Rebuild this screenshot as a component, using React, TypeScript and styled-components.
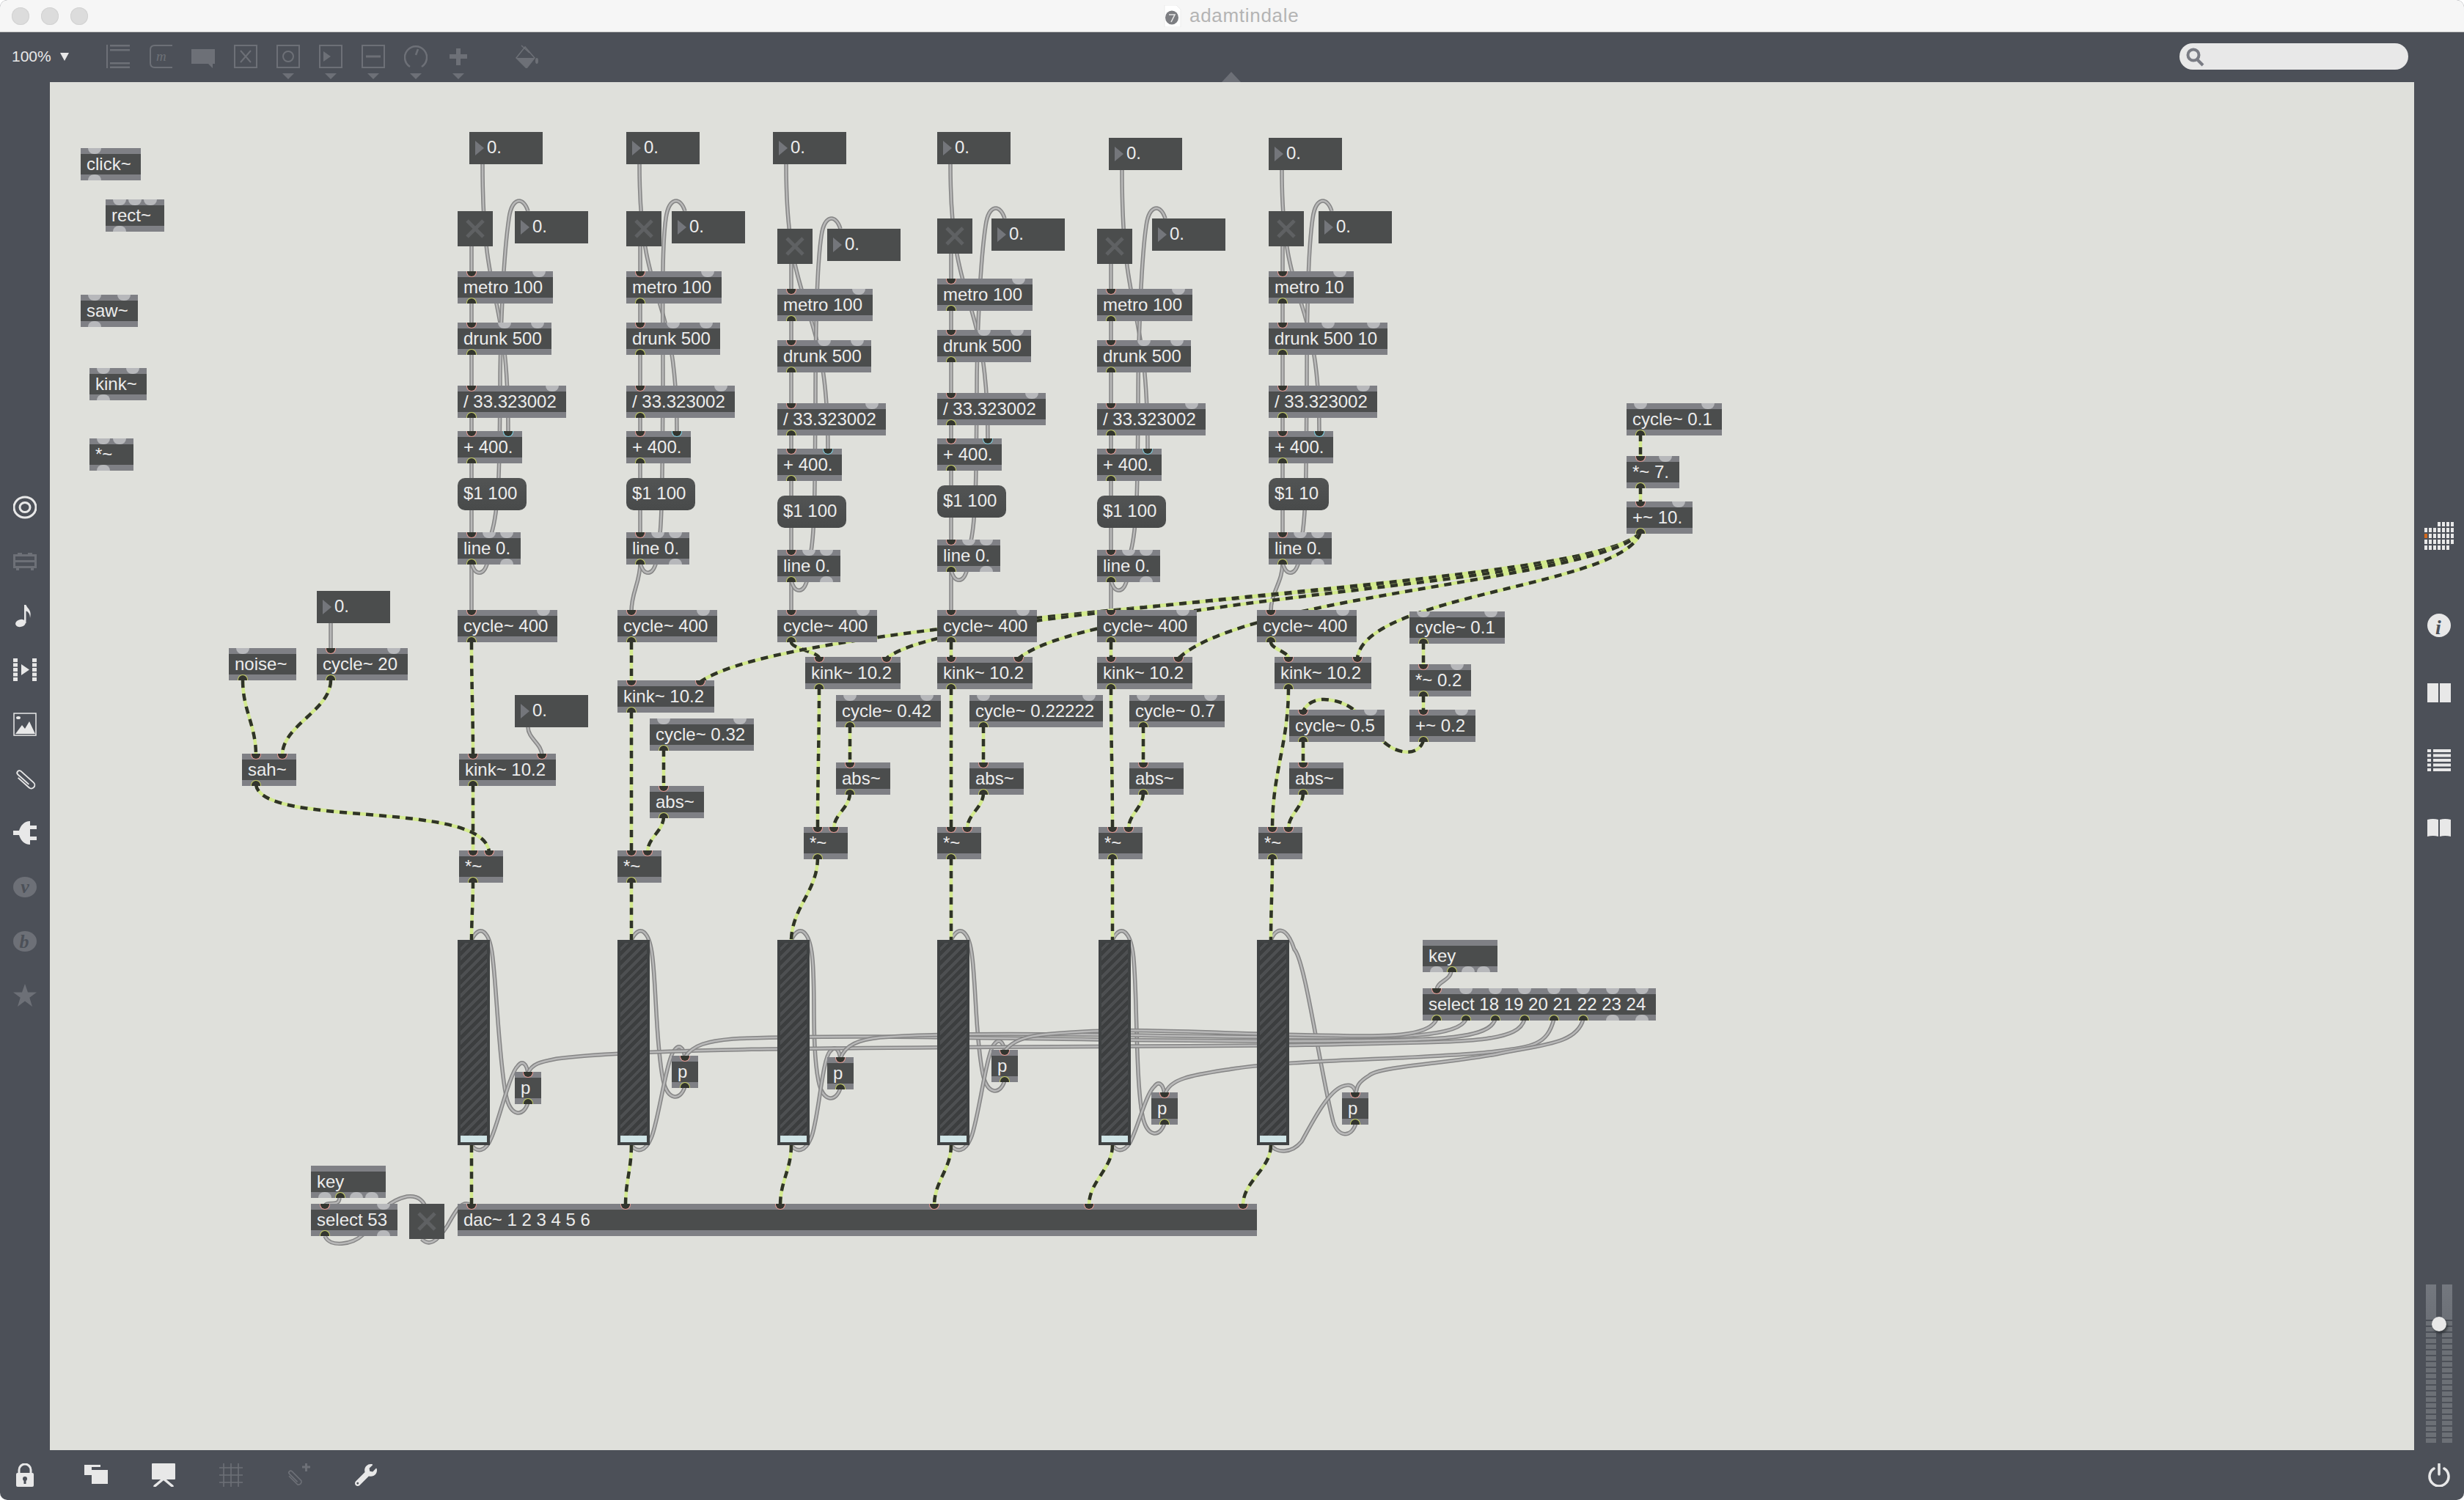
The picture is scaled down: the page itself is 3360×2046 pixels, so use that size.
import React from 'react';
import styled, { createGlobalStyle } from 'styled-components';
import { FaWrench } from 'react-icons/fa';

const BAR = '#4c5058';
const DIM = '#6d7077';
const LIT = '#e8e8e8';

const Global = createGlobalStyle`
  html, body { margin: 0; padding: 0; background: #ffffff; }
  body { font-family: "Liberation Sans", Arial, sans-serif; }
`;

const Win = styled.div`
  width: 3360px;
  height: 2046px;
  display: flex;
  flex-direction: column;
  overflow: hidden;
  border-radius: 10px;
  background: ${BAR};
`;
const TitleBar = styled.div`
  height: 43px;
  box-sizing: border-box;
  flex: none;
  display: flex;
  align-items: center;
  background: #f6f6f6;
  box-shadow: 0 1px 0 #c9c9c9;
  position: relative;
  z-index: 2;
`;
const Lights = styled.div`
  display: flex;
  gap: 16px;
  padding-left: 16px;
`;
const Light = styled.span`
  width: 24px;
  height: 24px;
  border-radius: 50%;
  background: #dcdcdc;
  box-shadow: inset 0 0 0 1px #d2d2d2;
`;
const TitleGroup = styled.div`
  position: absolute;
  left: 1587px;
  top: 0;
  height: 43px;
  display: flex;
  align-items: center;
  gap: 11px;
`;
const TitleText = styled.span`
  font-size: 26px;
  letter-spacing: 0.7px;
  color: #b4b4b4;
`;
const Toolbar = styled.div`
  height: 69px;
  flex: none;
  display: flex;
  align-items: flex-start;
  position: relative;
`;
const ZoomGroup = styled.div`
  width: 145px;
  box-sizing: border-box;
  padding: 20px 0 0 16px;
  display: flex;
  align-items: center;
  gap: 12px;
  font-size: 21px;
  line-height: 28px;
  color: ${LIT};
`;
const ZoomArrow = styled.span`
  width: 0;
  height: 0;
  border-left: 6px solid transparent;
  border-right: 6px solid transparent;
  border-top: 11px solid ${LIT};
`;
const ToolButtons = styled.div`
  display: flex;
  gap: 26px;
  padding-top: 18px;
`;
const ToolButton = styled.div<{ $gap?: number }>`
  width: 32px;
  height: 32px;
  position: relative;
  margin-left: ${(p) => p.$gap ?? 0}px;
  color: ${DIM};
`;
const Caret = styled.span`
  position: absolute;
  left: 8px;
  top: 39px;
  width: 0;
  height: 0;
  border-left: 8px solid transparent;
  border-right: 8px solid transparent;
  border-top: 8px solid ${DIM};
`;
const Search = styled.div`
  margin: 16px 76px 0 auto;
  width: 312px;
  height: 36px;
  border-radius: 18px;
  background: #e8e8e8;
  display: flex;
  align-items: center;
  padding-left: 8px;
  box-sizing: border-box;
  color: #7a7c84;
`;
const Notch = styled.span`
  position: absolute;
  left: 1666px;
  bottom: 0;
  width: 0;
  height: 0;
  border-left: 13px solid transparent;
  border-right: 13px solid transparent;
  border-bottom: 14px solid ${DIM};
`;
const Middle = styled.div`
  flex: 1;
  display: flex;
  min-height: 0;
`;
const LeftBar = styled.div`
  width: 68px;
  flex: none;
  box-sizing: border-box;
  padding-top: 543px;
  display: flex;
  flex-direction: column;
  align-items: center;
`;
const SideSlot = styled.div<{ $lit?: boolean }>`
  height: 74px;
  width: 68px;
  display: flex;
  align-items: center;
  justify-content: center;
  color: ${(p) => (p.$lit ? LIT : DIM)};
`;
const RightBar = styled.div`
  width: 68px;
  flex: none;
  box-sizing: border-box;
  padding-top: 600px;
  display: flex;
  flex-direction: column;
  align-items: center;
  color: ${LIT};
  position: relative;
`;
const RightItem = styled.div<{ $after: number }>`
  display: flex;
  margin-bottom: ${(p) => p.$after}px;
`;
const Meter = styled.div`
  margin-top: auto;
  margin-bottom: 10px;
  display: flex;
  gap: 8px;
  height: 216px;
  position: relative;
`;
const MeterCol = styled.div`
  width: 14px;
  height: 216px;
  background:
    linear-gradient(#74787f, #6c7077) 0 0 / 100% 48px no-repeat,
    repeating-linear-gradient(to top, #6c7076 0 6px, transparent 6px 8px);
`;
const MeterKnob = styled.span`
  position: absolute;
  left: 8px;
  top: 44px;
  width: 20px;
  height: 20px;
  border-radius: 50%;
  background: #e8e8e8;
  box-shadow: 2px 3px 3px rgba(30, 32, 36, 0.55);
`;
const Canvas = styled.div`
  flex: 1;
  position: relative;
  background: #dfe0db;
  overflow: hidden;
`;
const Wires = styled.svg`
  position: absolute;
  left: 0;
  top: 0;
  fill: none;
`;
const BottomBar = styled.div`
  height: 68px;
  flex: none;
  display: flex;
  align-items: center;
  gap: 60px;
  padding-left: 18px;
  position: relative;
`;
const BottomIcon = styled.div<{ $lit?: boolean; $extra?: number }>`
  width: 32px;
  height: 32px;
  display: flex;
  align-items: center;
  justify-content: center;
  color: ${(p) => (p.$lit ? LIT : DIM)};
  margin-right: ${(p) => p.$extra ?? 0}px;
`;
const PowerIcon = styled.div`
  margin-left: auto;
  margin-right: 18px;
  width: 32px;
  height: 32px;
  color: ${LIT};
`;

const Node = styled.div<{ $x: number; $y: number; $w: number; $h?: number }>`
  position: absolute;
  left: ${(p) => p.$x - 68}px;
  top: ${(p) => p.$y - 112}px;
  width: ${(p) => p.$w}px;
  height: ${(p) => p.$h ?? 44}px;
`;
const ObjectBox = styled(Node)`
  background: #7f8085;
  font-size: 24px;
  color: #ececec;
`;
const ObjectBody = styled.div`
  position: absolute;
  left: 0;
  right: 0;
  top: 8px;
  height: 28px;
  line-height: 27px;
  padding-left: 8px;
  background: #4b4d4d;
  white-space: nowrap;
`;
const Port = styled.span<{ $x: number; $side: 'top' | 'bottom'; $kind: string }>`
  position: absolute;
  left: ${(p) => p.$x}px;
  transform: translateX(-50%);
  box-sizing: border-box;
  ${(p) => (p.$side === 'top' ? 'top: 0; border-radius: 0 0 9px 9px;' : 'bottom: 0; border-radius: 9px 9px 0 0;')}
  ${(p) =>
    p.$kind === 'u'
      ? 'width: 18px; height: 8px; background: #b7b8bb;'
      : `width: 14px; height: 8px; background: #33352f; border: 1.5px solid ${
          p.$kind === 'c' ? '#e99c96' : p.$kind === 'b' ? '#7fd2e4' : '#c9d267'
        }; ${p.$side === 'top' ? 'border-top: 0;' : 'border-bottom: 0;'}`}
`;
const NumberBox = styled(Node)`
  background: #4b4d4d;
  font-size: 24px;
  color: #ececec;
  line-height: 41px;
  padding-left: 24px;
  box-sizing: border-box;
`;
const NumberArrow = styled.span`
  position: absolute;
  left: 8px;
  top: 12px;
  width: 0;
  height: 0;
  border-top: 10px solid transparent;
  border-bottom: 10px solid transparent;
  border-left: 12px solid #74767b;
`;
const MessageBox = styled(Node)`
  background: linear-gradient(#525454, #484a4a);
  border-radius: 10px;
  font-size: 24px;
  color: #ececec;
  line-height: 42px;
  padding-left: 8px;
  box-sizing: border-box;
`;
const ToggleBox = styled(Node)`
  background: #4b4d4d;
  color: #5f6163;
  display: flex;
  align-items: center;
  justify-content: center;
`;
const SliderBox = styled(Node)`
  background: #3f4243;
  box-sizing: border-box;
  padding: 4px;
  display: flex;
  flex-direction: column;
`;
const SliderTrack = styled.div`
  flex: 1;
  background: repeating-linear-gradient(-45deg, #3c3e3f 0 5px, #4d4f51 5px 9px);
`;
const SliderKnob = styled.div`
  height: 9px;
  margin-bottom: 0;
  background: #cfe4e6;
`;

/* ---------- wires ---------- */
const curve = (x1: number, y1: number, x2: number, y2: number, k = 0.4) => {
  const d = Math.abs(y2 - y1) * k;
  return `M${x1} ${y1} C${x1} ${y1 + d} ${x2} ${y2 - d} ${x2} ${y2}`;
};

const GrayCord = ({ d }: { d: string }) => (
  <>
    <path d={d} stroke="#858585" strokeWidth={5.5} />
    <path d={d} stroke="#b8b8b8" strokeWidth={2.5} />
  </>
);
const SignalCord = ({ d }: { d: string }) => (
  <>
    <path d={d} stroke="#d3ea8e" strokeWidth={4.5} />
    <path d={d} stroke="#2f3327" strokeWidth={4.5} strokeDasharray="10 8" />
  </>
);

type Col = {
  x: number; fx: number; fy: number; ty: number; f2x: number; f2y: number; dy: number; cyX: number; mid: number;
  met: string; metW: number; dr: string; drW: number; msg: string; msgW: number;
};
const base = { met: 'metro 100', metW: 130, dr: 'drunk 500', drW: 128, msg: '$1 100', msgW: 94 };
const cols: Col[] = [
  { ...base, x: 624, fx: 640, fy: 180, ty: 288, f2x: 702, f2y: 288, dy: 0, cyX: 624, mid: 682 },
  { ...base, x: 854, fx: 854, fy: 180, ty: 288, f2x: 916, f2y: 288, dy: 0, cyX: 842, mid: 904 },
  { ...base, x: 1060, fx: 1054, fy: 180, ty: 312, f2x: 1128, f2y: 312, dy: 24, cyX: 1060, mid: 1112 },
  { ...base, x: 1278, fx: 1278, fy: 180, ty: 298, f2x: 1352, f2y: 298, dy: 10, cyX: 1278, mid: 1332 },
  { ...base, x: 1496, fx: 1512, fy: 188, ty: 312, f2x: 1571, f2y: 298, dy: 24, cyX: 1496, mid: 1552 },
  { ...base, x: 1730, fx: 1730, fy: 188, ty: 288, f2x: 1798, f2y: 288, dy: 0, cyX: 1714, mid: 1782, met: 'metro 10', metW: 116, dr: 'drunk 500 10', drW: 162, msg: '$1 10', msgW: 82 },
];

type Ob = { t: string; x: number; y: number; w: number; top?: string; bot?: string };
const o = (t: string, x: number, y: number, w: number, top = '', bot = ''): Ob => ({ t, x, y, w, top, bot });

const objects: Ob[] = [
  o('click~', 110, 202, 82, 'u', 'u'),
  o('rect~', 144, 272, 80, 'uuu', 'u'),
  o('saw~', 110, 402, 78, 'uu', 'u'),
  o('kink~', 122, 502, 78, 'uu', 'u'),
  o('*~', 122, 598, 60, 'uu', 'u'),
  o('noise~', 312, 884, 92, 'u', 'y'),
  o('cycle~ 20', 432, 884, 124, 'cu', 'y'),
  o('sah~', 330, 1028, 74, 'cc', 'y'),
  o('kink~ 10.2', 626, 1028, 132, 'cc', 'y'),
  o('*~', 626, 1160, 60, 'cc', 'y'),
  o('kink~ 10.2', 842, 928, 132, 'cc', 'y'),
  o('cycle~ 0.32', 886, 980, 142, 'uu', 'y'),
  o('abs~', 886, 1072, 74, 'c', 'y'),
  o('*~', 842, 1160, 60, 'cc', 'y'),
  o('kink~ 10.2', 1098, 896, 130, 'cc', 'y'),
  o('cycle~ 0.42', 1140, 948, 143, 'uu', 'y'),
  o('abs~', 1140, 1040, 74, 'c', 'y'),
  o('*~', 1096, 1128, 60, 'cc', 'y'),
  o('kink~ 10.2', 1278, 896, 130, 'cc', 'y'),
  o('cycle~ 0.22222', 1322, 948, 182, 'uu', 'y'),
  o('abs~', 1322, 1040, 74, 'c', 'y'),
  o('*~', 1278, 1128, 60, 'cc', 'y'),
  o('kink~ 10.2', 1496, 896, 130, 'cc', 'y'),
  o('cycle~ 0.7', 1540, 948, 130, 'uu', 'y'),
  o('abs~', 1540, 1040, 74, 'c', 'y'),
  o('*~', 1498, 1128, 60, 'cc', 'y'),
  o('kink~ 10.2', 1738, 896, 132, 'cc', 'y'),
  o('cycle~ 0.5', 1758, 968, 130, 'cu', 'y'),
  o('abs~', 1758, 1040, 74, 'c', 'y'),
  o('*~', 1716, 1128, 60, 'cc', 'y'),
  o('cycle~ 0.1', 1922, 834, 130, 'uu', 'y'),
  o('*~ 0.2', 1922, 906, 84, 'cu', 'y'),
  o('+~ 0.2', 1922, 968, 90, 'cu', 'y'),
  o('cycle~ 0.1', 2218, 550, 130, 'uu', 'y'),
  o('*~ 7.', 2218, 622, 72, 'cu', 'y'),
  o('+~ 10.', 2218, 684, 90, 'cu', 'y'),
  o('p', 702, 1462, 36, 'c', 'y'),
  o('p', 916, 1440, 36, 'c', 'y'),
  o('p', 1128, 1442, 36, 'c', 'y'),
  o('p', 1352, 1432, 36, 'c', 'y'),
  o('p', 1570, 1490, 36, 'c', 'y'),
  o('p', 1830, 1490, 36, 'c', 'y'),
  o('key', 424, 1590, 102, '', 'uyuu'),
  o('select 53', 424, 1642, 118, 'cu', 'yu'),
  o('key', 1940, 1282, 102, '', 'uyuu'),
  o('select 18 19 20 21 22 23 24', 1940, 1348, 318, 'cuuuuuuu', 'yyyyyyuu'),
  o('dac~ 1 2 3 4 5 6', 624, 1642, 1090, 'cccccc', ''),
];
cols.forEach((c) => {
  objects.push(
    o(c.met, c.x, 370 + c.dy, c.metW, 'cu', 'y'),
    o(c.dr, c.x, 440 + c.dy, c.drW, 'cuu', 'y'),
    o('/ 33.323002', c.x, 526 + c.dy, 148, 'cu', 'y'),
    o('+ 400.', c.x, 588 + c.dy, 88, 'cb', 'y'),
    o('line 0.', c.x, 726 + c.dy, 86, 'cuu', 'yu'),
    o('cycle~ 400', c.cyX, 832, 136, 'cu', 'y'),
  );
});

const numbers: { x: number; y: number }[] = [
  { x: 432, y: 806 },
  { x: 702, y: 948 },
  ...cols.flatMap((c) => [
    { x: c.fx, y: c.fy },
    { x: c.f2x, y: c.f2y },
  ]),
];
const toggles: { x: number; y: number }[] = [{ x: 558, y: 1642 }, ...cols.map((c) => ({ x: c.x, y: c.ty }))];
const sliders = [624, 842, 1060, 1278, 1498, 1714];

const grayPaths: string[] = [
  curve(451, 850, 451, 886),
  curve(720, 992, 739, 1030),
  'M463 1634 C462 1648 444 1636 443 1646',
  'M443 1686 C450 1702 480 1698 495 1684 C515 1665 520 1640 555 1632 C570 1630 578 1638 582 1650',
  'M575 1690 C585 1700 595 1695 610 1672 C622 1650 630 1636 643 1644',
  'M1979 1324 C1978 1338 1960 1338 1959 1350',
];
cols.forEach((c) => {
  const x = c.x, y = c.dy;
  const s = x + 19;
  grayPaths.push(
    curve(c.fx + 18, c.fy + 44, x + 69, 590 + y, 0.55),
    `M${c.f2x + 18} ${c.f2y} C${c.f2x + 12} ${c.f2y - 20} ${c.f2x - 4} ${c.f2y - 20} ${c.f2x - 8} ${c.f2y + 10} C${c.f2x - 14} ${c.f2y + 50} ${c.mid} ${430 + y} ${c.mid} ${526 + y} C${c.mid - 1} ${620 + y} ${c.mid} ${690 + y} ${x + 46} ${728 + y}`,
    curve(s, c.ty + 46, s, 372 + y),
    curve(s, 412 + y, s, 442 + y),
    curve(s, 482 + y, s, 528 + y),
    curve(s, 568 + y, s, 590 + y),
    curve(s, 630 + y, s, 654 + y),
    curve(s, 694 + y, s, 728 + y),
    curve(s, 768 + y, c.cyX + 19, 834),
    `M${s} ${768 + y} C${s + 5} ${786 + y} ${s + 17} ${786 + y} ${s + 22} ${766 + y}`,
  );
});

const sliderLoop = (sx: number, px: number, py: number) => {
  const oy = py + 42;
  return [
    `M${px} ${oy} C${px - 6} ${oy + 20} ${px - 24} ${oy + 20} ${px - 30} ${oy - 10} C${px - 40} ${oy - 60} ${sx + 34} 1340 ${sx + 28} 1300 C${sx + 24} 1272 ${sx + 12} 1258 ${sx} 1282`,
    `M${sx} 1562 C${sx + 7} 1572 ${sx + 19} 1572 ${sx + 27} 1552 C${sx + 37} 1530 ${px - 25} ${py + 2} ${px - 14} ${py - 8} C${px - 8} ${py - 16} ${px - 2} ${py - 12} ${px} ${py + 2}`,
  ];
};
grayPaths.push(
  ...sliderLoop(643, 720, 1462),
  ...sliderLoop(861, 934, 1440),
  ...sliderLoop(1079, 1146, 1442),
  ...sliderLoop(1297, 1370, 1432),
  ...sliderLoop(1517, 1588, 1490),
  'M1849 1532 C1843 1552 1825 1552 1818 1530 C1800 1460 1780 1310 1765 1295 C1755 1265 1742 1262 1733 1282',
  'M1733 1562 C1740 1572 1760 1575 1775 1557 C1790 1530 1810 1490 1830 1482 C1840 1478 1847 1480 1849 1492',
  'M2079 1390 C2070 1425 1990 1420 1800 1425 C1400 1430 900 1425 760 1444 C740 1448 725 1450 720 1464',
  'M2039 1390 C2030 1420 1950 1418 1800 1420 C1500 1422 1200 1408 1000 1417 C965 1420 945 1425 934 1442',
  'M1999 1390 C1990 1415 1900 1415 1800 1415 C1600 1415 1350 1405 1200 1415 C1172 1418 1152 1425 1146 1444',
  'M1959 1390 C1950 1412 1900 1413 1860 1413 C1700 1412 1560 1402 1480 1407 C1420 1410 1385 1412 1370 1434',
  'M2119 1390 C2110 1425 2090 1428 2040 1434 C1950 1445 1760 1445 1680 1458 C1630 1466 1595 1470 1589 1492',
  'M2159 1390 C2150 1425 2100 1425 2040 1438 C1960 1452 1880 1455 1867 1467 C1852 1476 1850 1482 1849 1492',
);

const signalPaths: string[] = [
  curve(331, 928, 349, 1030),
  curve(451, 928, 385, 1030),
  curve(643, 876, 645, 1030),
  curve(645, 1070, 645, 1162),
  'M349 1070 C356 1130 660 1090 667 1162',
  curve(645, 1202, 643, 1284),
  curve(643, 1562, 643, 1644),
  curve(861, 876, 861, 930),
  curve(861, 970, 861, 1162),
  curve(861, 1202, 861, 1284),
  curve(861, 1562, 853, 1644),
  curve(905, 1022, 905, 1074),
  curve(905, 1114, 883, 1162),
  curve(1079, 876, 1117, 898),
  curve(1117, 938, 1115, 1130),
  curve(1159, 990, 1159, 1042),
  curve(1159, 1082, 1137, 1130),
  curve(1115, 1170, 1079, 1284),
  curve(1079, 1562, 1064, 1644),
  curve(1297, 876, 1297, 898),
  curve(1297, 938, 1297, 1130),
  curve(1341, 990, 1341, 1042),
  curve(1341, 1082, 1319, 1130),
  curve(1297, 1170, 1297, 1284),
  curve(1297, 1562, 1274, 1644),
  curve(1515, 876, 1515, 898),
  curve(1515, 938, 1517, 1130),
  curve(1559, 990, 1559, 1042),
  curve(1559, 1082, 1539, 1130),
  curve(1517, 1170, 1517, 1284),
  curve(1517, 1562, 1485, 1644),
  curve(1733, 876, 1757, 898),
  curve(1757, 938, 1735, 1130),
  curve(1777, 1010, 1777, 1042),
  curve(1777, 1082, 1757, 1130),
  curve(1735, 1170, 1733, 1284),
  curve(1733, 1562, 1695, 1644),
  curve(1941, 876, 1941, 908),
  curve(1941, 948, 1941, 970),
  curve(2237, 592, 2237, 624),
  curve(2237, 664, 2237, 686),
  'M1941 1010 C1935 1032 1905 1030 1885 1010 C1860 985 1850 960 1815 955 C1800 952 1785 955 1777 970',
  'M2237 726 C2170 810 1100 830 955 930',
  'M2237 726 C2180 800 1300 820 1209 898',
  'M2237 726 C2180 800 1500 810 1389 898',
  'M2237 726 C2190 790 1700 810 1607 898',
  'M2237 726 C2215 800 1860 810 1851 898',
];

/* ---------- port layout ---------- */
const portX = (i: number, n: number, w: number) =>
  n === 1 ? (w < 40 ? w / 2 : 19) : 19 + (i * (w - 38)) / (n - 1);

const Ports = ({ spec, side, w }: { spec?: string; side: 'top' | 'bottom'; w: number }) => (
  <>
    {(spec ?? '').split('').map((k, i, all) => (
      <Port key={i} $x={portX(i, all.length, w)} $side={side} $kind={k} />
    ))}
  </>
);

const Stroke = { fill: 'none', stroke: 'currentColor' } as const;

const Svg32 = ({ children }: { children: React.ReactNode }) => (
  <svg width="32" height="32" viewBox="0 0 32 32" fill="currentColor">
    {children}
  </svg>
);

const toolIcons = [
  {
    caret: false,
    icon: (
      <Svg32>
        <rect x="0" y="0" width="2" height="32" />
        <rect x="5" y="0" width="27" height="2.5" />
        <rect x="5" y="6" width="27" height="2.5" />
        <rect x="5" y="24" width="27" height="2.5" />
        <rect x="5" y="29.5" width="27" height="2.5" />
      </Svg32>
    ),
  },
  {
    caret: false,
    icon: (
      <Svg32>
        <path d="M32 1H8Q2 1 2 7V25Q2 31 8 31H32" {...Stroke} strokeWidth="2" />
        <text x="10" y="22" fontFamily="'Liberation Serif', serif" fontStyle="italic" fontSize="19">m</text>
      </Svg32>
    ),
  },
  {
    caret: false,
    icon: (
      <Svg32>
        <path d="M0 6H32V26H29V32L23 26H0Z" />
      </Svg32>
    ),
  },
  {
    caret: false,
    icon: (
      <Svg32>
        <rect x="1" y="1" width="30" height="30" {...Stroke} strokeWidth="2" />
        <path d="M9 8L23 24M23 8L9 24" {...Stroke} strokeWidth="2" />
      </Svg32>
    ),
  },
  {
    caret: true,
    icon: (
      <Svg32>
        <rect x="1" y="1" width="30" height="30" {...Stroke} strokeWidth="2" />
        <circle cx="16" cy="16" r="7" {...Stroke} strokeWidth="2" />
      </Svg32>
    ),
  },
  {
    caret: true,
    icon: (
      <Svg32>
        <rect x="1" y="1" width="30" height="30" {...Stroke} strokeWidth="2" />
        <path d="M6 9L16 16L6 23Z" />
      </Svg32>
    ),
  },
  {
    caret: true,
    icon: (
      <Svg32>
        <rect x="1" y="1" width="30" height="30" {...Stroke} strokeWidth="2" />
        <rect x="6" y="14.5" width="20" height="3" />
      </Svg32>
    ),
  },
  {
    caret: true,
    icon: (
      <Svg32>
        <path d="M8 30A15 15 0 1 1 24 30" {...Stroke} strokeWidth="2.5" />
        <path d="M16 14L19 6" {...Stroke} strokeWidth="2.5" />
      </Svg32>
    ),
  },
  {
    caret: true,
    icon: (
      <Svg32>
        <path d="M13 5H19V13H28V19H19V28H13V19H4V13H13Z" />
      </Svg32>
    ),
  },
];

const sideIcons: { lit: boolean; icon: React.ReactNode }[] = [
  {
    lit: true,
    icon: (
      <Svg32>
        <ellipse cx="16" cy="16" rx="15" ry="14" {...Stroke} strokeWidth="3" />
        <ellipse cx="16" cy="16" rx="7" ry="6.5" {...Stroke} strokeWidth="3" />
      </Svg32>
    ),
  },
  {
    lit: false,
    icon: (
      <Svg32>
        <path d="M6 6V4H12V6H20V4H26V6H32V25H28V28H24V25H8V28H4V25H0V6Z" />
        <rect x="3" y="9" width="26" height="5" fill={BAR} />
        <rect x="3" y="17" width="26" height="5" fill={BAR} />
      </Svg32>
    ),
  },
  {
    lit: true,
    icon: (
      <Svg32>
        <ellipse cx="10" cy="26" rx="7" ry="5" transform="rotate(-15 10 26)" />
        <path d="M15 26V1H17.5C19 6 26 8 23 19C23 13 20 10 17.5 9.5V26Z" />
      </Svg32>
    ),
  },
  {
    lit: true,
    icon: (
      <Svg32>
        {[0, 6.5, 13, 19.5, 26].map((y) => (
          <React.Fragment key={y}>
            <rect x="0" y={y} width="6" height="5" />
            <rect x="26" y={y} width="6" height="5" />
          </React.Fragment>
        ))}
        <path d="M11 8L22 15.5L11 23Z" />
      </Svg32>
    ),
  },
  {
    lit: true,
    icon: (
      <Svg32>
        <rect x="1" y="1" width="30" height="30" {...Stroke} strokeWidth="1.5" />
        <path d="M3 29L12 17L16 22L22 12L30 29Z" />
        <ellipse cx="7" cy="7" rx="3" ry="2" />
      </Svg32>
    ),
  },
  {
    lit: true,
    icon: (
      <svg width="34" height="32" viewBox="-2 -4 44 40">
        <path
          d="M10 23H36A6 6 0 0 0 36 11H6A4 4 0 0 0 6 19H32"
          {...Stroke}
          strokeWidth="2.4"
          transform="rotate(42 20 16)"
        />
      </svg>
    ),
  },
  {
    lit: true,
    icon: (
      <Svg32>
        <path d="M0 13H8C10 6 15 0 23 0V32C15 32 10 26 8 19H0Z" />
        <rect x="23" y="6" width="9" height="5" />
        <rect x="23" y="21" width="9" height="5" />
      </Svg32>
    ),
  },
  {
    lit: false,
    icon: (
      <Svg32>
        <ellipse cx="16" cy="16" rx="16" ry="14" />
        <text x="16" y="24" textAnchor="middle" fontFamily="'Liberation Serif', serif" fontStyle="italic" fontWeight="bold" fontSize="26" fill={BAR}>v</text>
      </Svg32>
    ),
  },
  {
    lit: false,
    icon: (
      <Svg32>
        <ellipse cx="16" cy="16" rx="16" ry="14" />
        <text x="15" y="25" textAnchor="middle" fontFamily="'Liberation Serif', serif" fontStyle="italic" fontWeight="bold" fontSize="26" fill={BAR}>b</text>
      </Svg32>
    ),
  },
  {
    lit: false,
    icon: (
      <Svg32>
        <path d="M16 0L20 11.5H32L22.3 18.7L26 31L16 23.5L6 31L9.7 18.7L0 11.5H12Z" />
      </Svg32>
    ),
  },
];

const StepGrid = () => {
  const rows = [
    [3, 6],
    [0, 6],
    [0, 6],
    [0, 6],
    [0, 5],
  ];
  return (
    <svg width="40" height="38" viewBox="0 0 40 38" fill="currentColor">
      {rows.flatMap(([a, b], r) =>
        Array.from({ length: b - a + 1 }, (_, i) => (
          <rect
            key={`${r}-${i}`}
            x={(a + i) * 6}
            y={r * 8}
            width="4"
            height="6"
            fill={r === 2 && a + i === 0 ? '#d2691e' : 'currentColor'}
          />
        )),
      )}
    </svg>
  );
};

export default function App() {
  return (
    <Win>
      <Global />
      <TitleBar>
        <Lights>
          <Light />
          <Light />
          <Light />
        </Lights>
        <TitleGroup>
          <svg width="24" height="30" viewBox="0 0 24 30">
            <path d="M1 0H17L23 6V30H1Z" fill="#ffffff" stroke="#ececec" />
            <ellipse cx="11" cy="17" rx="9" ry="9.5" fill="#7d7e82" />
            <path d="M7 13H15L10 23" fill="none" stroke="#e8e8e8" strokeWidth="1.6" />
          </svg>
          <TitleText>adamtindale</TitleText>
        </TitleGroup>
      </TitleBar>
      <Toolbar>
        <ZoomGroup>
          100%
          <ZoomArrow />
        </ZoomGroup>
        <ToolButtons>
          {toolIcons.map((t, i) => (
            <ToolButton key={i}>
              {t.icon}
              {t.caret && <Caret />}
            </ToolButton>
          ))}
          <ToolButton $gap={35}>
            <Svg32>
              <path d="M14 3L2 18L16 32L27 18Z" {...Stroke} strokeWidth="1.5" />
              <path d="M2 18H27L16 32Z" />
              <path d="M9 1L20 11" {...Stroke} strokeWidth="1.5" />
              <ellipse cx="30" cy="22" rx="2" ry="4" />
            </Svg32>
          </ToolButton>
        </ToolButtons>
        <Search>
          <svg width="28" height="28" viewBox="0 0 28 28">
            <circle cx="11" cy="12" r="7.5" fill="none" stroke="currentColor" strokeWidth="4" />
            <path d="M16 18L24 26" stroke="currentColor" strokeWidth="4" />
          </svg>
        </Search>
        <Notch />
      </Toolbar>
      <Middle>
        <LeftBar>
          {sideIcons.map((s, i) => (
            <SideSlot key={i} $lit={s.lit}>
              {s.icon}
            </SideSlot>
          ))}
        </LeftBar>
        <Canvas>
          <Wires width="3224" height="1866" viewBox="68 112 3224 1866">
            {grayPaths.map((d, i) => (
              <GrayCord key={i} d={d} />
            ))}
            {signalPaths.map((d, i) => (
              <SignalCord key={i} d={d} />
            ))}
          </Wires>
          {objects.map((b, i) => (
            <ObjectBox key={i} $x={b.x} $y={b.y} $w={b.w}>
              <ObjectBody>{b.t}</ObjectBody>
              <Ports spec={b.top} side="top" w={b.w} />
              <Ports spec={b.bot} side="bottom" w={b.w} />
            </ObjectBox>
          ))}
          {numbers.map((n, i) => (
            <NumberBox key={i} $x={n.x} $y={n.y} $w={100}>
              <NumberArrow />
              0.
            </NumberBox>
          ))}
          {cols.map((c, i) => (
            <MessageBox key={i} $x={c.x} $y={652 + c.dy} $w={c.msgW}>
              {c.msg}
            </MessageBox>
          ))}
          {toggles.map((t, i) => (
            <ToggleBox key={i} $x={t.x} $y={t.y} $w={48} $h={48}>
              <svg width="26" height="26" viewBox="0 0 26 26">
                <path d="M2 2L24 24M24 2L2 24" stroke="currentColor" strokeWidth="5" />
              </svg>
            </ToggleBox>
          ))}
          {sliders.map((x) => (
            <SliderBox key={x} $x={x} $y={1282} $w={44} $h={280}>
              <SliderTrack />
              <SliderKnob />
            </SliderBox>
          ))}
        </Canvas>
        <RightBar>
          <RightItem $after={87}>
            <StepGrid />
          </RightItem>
          <RightItem $after={63}>
            <Svg32>
              <circle cx="16" cy="16" r="16" />
              <text x="15" y="28" textAnchor="middle" fontFamily="'Liberation Serif', serif" fontStyle="italic" fontWeight="bold" fontSize="28" fill={BAR}>i</text>
            </Svg32>
          </RightItem>
          <RightItem $after={64}>
            <svg width="32" height="26" viewBox="0 0 32 26" fill="currentColor">
              <rect x="0" y="0" width="15" height="26" />
              <rect x="17" y="0" width="15" height="26" />
            </svg>
          </RightItem>
          <RightItem $after={65}>
            <svg width="32" height="30" viewBox="0 0 32 30" fill="currentColor">
              {[0, 6.5, 13, 19.5, 26].map((y) => (
                <React.Fragment key={y}>
                  <rect x="0" y={y} width="5" height="4" />
                  <rect x="8" y={y} width="24" height="4" />
                </React.Fragment>
              ))}
            </svg>
          </RightItem>
          <RightItem $after={0}>
            <svg width="32" height="24" viewBox="0 0 32 24" fill="currentColor">
              <path d="M0 1Q8 -1 15 1V24Q8 22 0 24Z" />
              <path d="M17 1Q24 -1 32 1V24Q24 22 17 24Z" />
            </svg>
          </RightItem>
          <Meter>
            <MeterCol />
            <MeterCol />
            <MeterKnob />
          </Meter>
        </RightBar>
      </Middle>
      <BottomBar>
        <BottomIcon $lit $extra={5}>
          <svg width="26" height="32" viewBox="0 0 26 32" fill="currentColor">
            <path d="M5 14V9A8 8 0 0 1 21 9V14" fill="none" stroke="currentColor" strokeWidth="3" />
            <rect x="1" y="13" width="24" height="19" rx="2" />
            <circle cx="13" cy="21" r="3" fill={BAR} />
            <rect x="11.5" y="21" width="3" height="7" fill={BAR} />
          </svg>
        </BottomIcon>
        <BottomIcon $lit>
          <Svg32>
            <path d="M0 2H22V5H10V16H0Z" />
            <rect x="10" y="9" width="22" height="19" />
          </Svg32>
        </BottomIcon>
        <BottomIcon $lit>
          <Svg32>
            <rect x="0" y="0" width="32" height="22" rx="1" />
            <path d="M4 31L16 21L28 31" fill="none" stroke="currentColor" strokeWidth="3.5" strokeLinecap="round" />
          </Svg32>
        </BottomIcon>
        <BottomIcon>
          <Svg32>
            <path d="M0 6H32M0 16H32M0 26H32M6 0V32M16 0V32M26 0V32" {...Stroke} strokeWidth="1.6" />
          </Svg32>
        </BottomIcon>
        <BottomIcon>
          <Svg32>
            <path
              d="M7 19H27A5 5 0 0 0 27 10H5A3 3 0 0 0 5 16H24"
              {...Stroke}
              strokeWidth="2"
              transform="translate(-4 8) rotate(45 14 14) scale(.82)"
            />
            <path d="M21 5H32M26.5 0V11" {...Stroke} strokeWidth="3" />
          </Svg32>
        </BottomIcon>
        <BottomIcon $lit>
          <FaWrench size={30} />
        </BottomIcon>
        <PowerIcon>
          <Svg32>
            <path d="M9 7A13 13 0 1 0 23 7" {...Stroke} strokeWidth="3.5" strokeLinecap="round" />
            <path d="M16 1V15" {...Stroke} strokeWidth="3.5" strokeLinecap="round" />
          </Svg32>
        </PowerIcon>
      </BottomBar>
    </Win>
  );
}
